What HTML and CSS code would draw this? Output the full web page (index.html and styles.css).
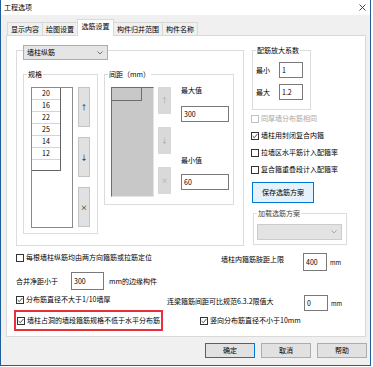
FILE: index.html
```html
<!DOCTYPE html>
<html lang="zh-CN">
<head>
    <meta charset="UTF-8">
    <title>工程选项</title>
    <link rel="stylesheet" href="styles.css">
</head>
<body>
<div class="window">
    <div class="title-bar">
        <span class="title">工程选项</span>
        <svg class="close" width="7" height="7" viewBox="0 0 7 7"><path d="M0.5 0.5L6.5 6.5M6.5 0.5L0.5 6.5" stroke="#333" stroke-width="0.9" fill="none"/></svg>
    </div>

    <div class="tabs">
        <div class="tab tab-w1">显示内容</div>
        <div class="tab tab-w1">绘图设置</div>
        <div class="tab tab-w2 active">选筋设置</div>
        <div class="tab tab-w3">构件归并范围</div>
        <div class="tab tab-w1">构件名称</div>
    </div>

    <div class="panel">
        <div class="top-area">
            <div class="group main-group">
                <div class="combo main-combo">
                    <span>墙柱纵筋</span>
                    <svg width="6" height="4" viewBox="0 0 6 4"><polyline points="0.5,0.5 3,3 5.5,0.5" fill="none" stroke="#555" stroke-width="0.8"/></svg>
                </div>

                <div class="group spec-group">
                    <span class="group-title">规格</span>
                    <div class="spec-list">
                        <div class="spec-grid">
                            <div class="spec-row">20</div>
                            <div class="spec-row">16</div>
                            <div class="spec-row">22</div>
                            <div class="spec-row">25</div>
                            <div class="spec-row">14</div>
                            <div class="spec-row">12</div>
                            <div class="spec-row blank"></div>
                        </div>
                    </div>
                    <div class="spec-buttons">
                        <button class="side-btn">↑</button>
                        <button class="side-btn">↓</button>
                        <button class="side-btn">×</button>
                    </div>
                </div>

                <div class="group gap-group">
                    <span class="group-title">间距（mm）</span>
                    <div class="gray-list">
                        <div class="gray-head"></div>
                    </div>
                    <div class="gap-buttons">
                        <button class="side-btn off">↑</button>
                        <button class="side-btn off">↓</button>
                        <button class="side-btn off">×</button>
                    </div>
                    <div class="limit-col">
                        <span class="limit-max">最大值</span>
                        <div class="input limit-input first">300</div>
                        <span class="limit-min">最小值</span>
                        <div class="input limit-input second">60</div>
                    </div>
                </div>
            </div>

            <div class="right-col">
                <div class="group factor-group">
                    <span class="group-title">配筋放大系数</span>
                    <div class="factor-row">
                        <span class="factor-label">最小</span>
                        <div class="input factor-input">1</div>
                    </div>
                    <div class="factor-row">
                        <span class="factor-label">最大</span>
                        <div class="input factor-input">1.2</div>
                    </div>
                </div>

                <div class="check-list">
                    <label class="check off"><span class="box"></span><span>同厚墙分布筋相同</span></label>
                    <label class="check"><span class="box"><svg width="6" height="6" viewBox="0 0 6 6"><polyline points="0.6,3 2.3,4.7 5.4,1" fill="none" stroke="#222" stroke-width="0.8"/></svg></span><span>墙柱用封闭复合内箍</span></label>
                    <label class="check"><span class="box"></span><span>拉墙区水平筋计入配箍率</span></label>
                    <label class="check"><span class="box"></span><span>复合箍重叠段计入配箍率</span></label>
                </div>

                <button class="btn save-btn">保存选筋方案</button>

                <div class="group load-group">
                    <span class="group-title">加载选筋方案</span>
                    <div class="combo load-combo">
                        <span></span>
                        <svg width="6" height="4" viewBox="0 0 6 4"><polyline points="0.5,0.5 3,3 5.5,0.5" fill="none" stroke="#999" stroke-width="0.8"/></svg>
                    </div>
                </div>
            </div>
        </div>

        <div class="row row-1">
            <label class="check wide-check"><span class="box"></span><span>每根墙柱纵筋均由两方向箍筋或拉筋定位</span></label>
            <span class="row1-label">墙柱内箍筋肢距上限</span>
            <div class="input small-input row1-input">400</div>
            <span class="unit">mm</span>
        </div>

        <div class="row row-2">
            <span class="merge-label">合并净距小于</span>
            <div class="input merge-input">300</div>
            <span class="merge-unit">mm的边缘构件</span>
        </div>

        <div class="row row-3">
            <label class="check mid-check"><span class="box"><svg width="6" height="6" viewBox="0 0 6 6"><polyline points="0.6,3 2.3,4.7 5.4,1" fill="none" stroke="#222" stroke-width="0.8"/></svg></span><span>分布筋直径不大于1/10墙厚</span></label>
            <span class="beam-label">连梁箍筋间距可比规范6.3.2限值大</span>
            <div class="input small-input beam-input">0</div>
            <span class="unit">mm</span>
        </div>

        <div class="row row-4">
            <div class="highlight">
                <label class="check"><span class="box"><svg width="6" height="6" viewBox="0 0 6 6"><polyline points="0.6,3 2.3,4.7 5.4,1" fill="none" stroke="#222" stroke-width="0.8"/></svg></span><span>墙柱占洞的墙段箍筋规格不低于水平分布筋</span></label>
            </div>
            <label class="check vertical-check"><span class="box"><svg width="6" height="6" viewBox="0 0 6 6"><polyline points="0.6,3 2.3,4.7 5.4,1" fill="none" stroke="#222" stroke-width="0.8"/></svg></span><span>竖向分布筋直径不小于10mm</span></label>
        </div>
    </div>

    <div class="dialog-buttons">
        <button class="btn dialog-btn default">确定</button>
        <button class="btn dialog-btn">取消</button>
        <button class="btn dialog-btn">帮助</button>
    </div>
</div>
</body>
</html>
```

FILE: styles.css
```css
* {
    margin: 0;
    padding: 0;
    box-sizing: border-box;
}

body {
    background-color: #fff;
    font-family: "Noto Sans CJK SC", "Liberation Sans", sans-serif;
    font-size: 7px;
    line-height: 9px;
    color: #000;
}

button {
    font-family: inherit;
    font-size: 7px;
    line-height: 9px;
    color: #000;
}

.window {
    width: 371px;
    height: 366px;
    border: 1px solid #1f5d9e;
    border-top: none;
    background-color: #f0f0f0;
    display: flex;
    flex-direction: column;
}

.title-bar {
    height: 15px;
    background-color: #fff;
    display: flex;
    align-items: center;
    justify-content: space-between;
    padding: 0 4px 0 3px;
}

/* tabs */
.tabs {
    display: flex;
    align-items: flex-end;
    height: 16px;
    margin: 4px 0 0 6px;
    position: relative;
    z-index: 1;
}

.tab {
    height: 13px;
    border: 1px solid #d9d9d9;
    border-bottom: none;
    background-color: #f0f0f0;
    margin-right: -1px;
    text-align: center;
    line-height: 12px;
}

.tab-w1 { width: 36px; }
.tab-w2 { width: 37px; }
.tab-w3 { width: 50px; }

.tab.active {
    height: 17px;
    background-color: #fff;
    margin-bottom: -1px;
    line-height: 13px;
}

.panel {
    width: 360px;
    height: 302px;
    margin-left: 5px;
    border: 1px solid #d9d9d9;
    background-color: #fff;
    padding: 14px 0 0 9px;
}

/* group boxes */
.group {
    position: relative;
    border: 1px solid #dcdcdc;
}

.group-title {
    position: absolute;
    top: -5px;
    left: 3px;
    padding: 0 1px;
    background-color: #fff;
    white-space: nowrap;
}

.top-area {
    display: flex;
    align-items: flex-start;
}

.main-group {
    width: 228px;
    height: 196px;
    padding: 23px 0 0 6px;
    display: flex;
    align-items: flex-start;
}

.combo {
    display: flex;
    align-items: center;
    justify-content: space-between;
    border: 1px solid #acacac;
    background-color: #e5e5e5;
    padding: 0 4px 0 3px;
}

.main-combo {
    position: absolute;
    top: -6px;
    left: 6px;
    width: 85px;
    height: 15px;
}

.spec-group {
    width: 75px;
    height: 160px;
    padding: 12px 0 0 7px;
    display: flex;
    gap: 5px;
}

.spec-list {
    width: 42px;
    height: 141px;
    border: 1px solid #8a8a8a;
    background-color: #fff;
}

.spec-grid {
    width: 29px;
    border-right: 1px solid #646464;
    border-bottom: 1px solid #646464;
}

.spec-row {
    height: 12px;
    border-bottom: 1px solid #d4d4d4;
    text-align: center;
    line-height: 11px;
}

.spec-row.blank {
    height: 10px;
    border-bottom: none;
}

.spec-buttons {
    display: flex;
    flex-direction: column;
    gap: 10px;
}

.side-btn {
    width: 12px;
    height: 40px;
    border: 1px solid #c4c4c4;
    background-color: #e1e1e1;
}

.side-btn.off {
    width: 13px;
    height: 27px;
    border-color: #d8d8d8;
    background-color: #d9d9d9;
    color: #a8a8a8;
}

.gap-group {
    width: 130px;
    height: 131px;
    margin-left: 6px;
    padding: 12px 0 0 6px;
    display: flex;
    align-items: flex-start;
}

.gray-list {
    width: 43px;
    height: 110px;
    background-color: #c8c8c8;
    border-top: 1px solid #6e6e6e;
    border-left: 1px solid #6e6e6e;
    border-right: 1px solid #e4e4e4;
    border-bottom: 1px solid #e4e4e4;
}

.gray-head {
    width: 30px;
    height: 13px;
    border-right: 1px solid #6e6e6e;
    border-bottom: 1px solid #6e6e6e;
}

.gap-buttons {
    display: flex;
    flex-direction: column;
    gap: 13px;
    margin-left: 4px;
}

.limit-col {
    display: flex;
    flex-direction: column;
    margin-left: 10px;
}

.limit-max { margin-top: -1px; }

.input {
    border: 1px solid #7a7a7a;
    background-color: #fff;
    padding-left: 2px;
    display: flex;
    align-items: center;
}

.limit-input {
    width: 48px;
    height: 16px;
}

.limit-input.first { margin-top: 11px; }
.limit-min { margin-top: 34px; }
.limit-input.second { margin-top: 9px; }

/* right column */
.right-col {
    width: 95px;
    margin-left: 8px;
    display: flex;
    flex-direction: column;
    align-items: flex-start;
}

.factor-group {
    width: 59px;
    height: 60px;
    padding: 11px 0 0 3px;
    display: flex;
    flex-direction: column;
    gap: 6px;
}

.factor-row {
    display: flex;
    align-items: center;
}

.factor-label { width: 23px; }

.factor-input {
    width: 24px;
    height: 16px;
}

.check-list {
    display: flex;
    flex-direction: column;
    margin-left: -1px;
}

.check-list .check { height: 17px; }

.check {
    display: flex;
    align-items: center;
    gap: 2px;
    white-space: nowrap;
}

.box {
    width: 8px;
    height: 8px;
    border: 1px solid #333;
    background-color: #fff;
    display: flex;
    align-items: center;
    justify-content: center;
    flex-shrink: 0;
}

.check.off { color: #a8a8a8; }
.check.off .box { border-color: #c2c2c2; }

.btn {
    border: 1px solid #adadad;
    background-color: #e1e1e1;
}

.save-btn {
    width: 62px;
    height: 21px;
    margin-top: 4px;
    border-color: #0078d7;
    background-color: #e5f1fb;
}

.load-group {
    width: 94px;
    height: 32px;
    margin: 10px 0 0 1px;
    padding: 10px 0 0 3px;
}

.load-group .group-title { color: #444; }

.load-combo {
    width: 85px;
    height: 16px;
    border-color: #cccccc;
    background-color: #e3e3e3;
}

/* lower rows */
.row {
    display: flex;
    align-items: center;
    white-space: nowrap;
}

.row-1 {
    height: 18px;
    margin-top: 7px;
}

.wide-check {
    width: 186px;
    align-self: flex-start;
}

.row1-label {
    width: 82px;
    text-align: right;
    align-self: flex-start;
    margin-top: 2px;
}

.small-input {
    width: 24px;
    height: 18px;
}

.row1-input { margin-left: 19px; }

.unit {
    margin-left: 3px;
    font-size: 6px;
}

.row-2 {
    height: 18px;
    margin-top: 1px;
}

.merge-label { width: 55px; }

.merge-input {
    width: 33px;
    height: 18px;
}

.merge-unit { margin-left: 5px; }

.row-3 {
    height: 16px;
    margin-top: 5px;
    align-items: flex-start;
}

.mid-check { width: 151px; }

.beam-label {
    width: 108px;
    margin-top: 2px;
}

.beam-input {
    height: 16px;
    margin-left: 29px;
}

.row-3 .unit { margin-top: 4px; }

.row-4 {
    height: 21px;
    margin-top: -1px;
}

.highlight {
    width: 149px;
    height: 21px;
    margin-left: -2px;
    border: 2px solid #e8303a;
    padding-left: 1px;
    display: flex;
    align-items: center;
}

.vertical-check { margin-left: 37px; }

/* dialog buttons */
.dialog-buttons {
    display: flex;
    justify-content: flex-end;
    gap: 6px;
    margin-top: 6px;
    padding-right: 3px;
}

.dialog-btn {
    width: 50px;
    height: 15px;
}

.dialog-btn.default { border-color: #0078d7; }
```
